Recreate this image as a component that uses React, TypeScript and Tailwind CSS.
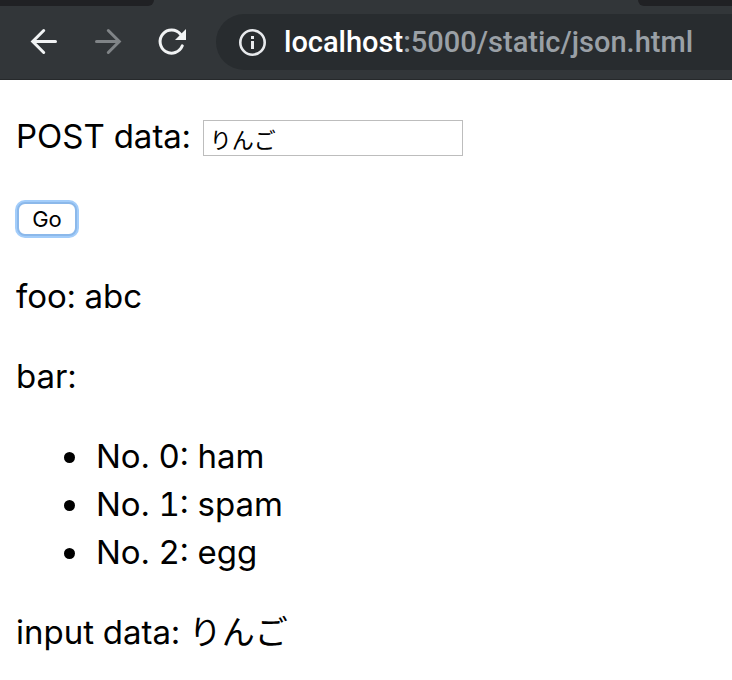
import React, { useState } from 'react';

interface ResponseData {
  foo: string;
  bar: string[];
  input: string;
}

const response: ResponseData = {
  foo: 'abc',
  bar: ['ham', 'spam', 'egg'],
  input: 'りんご',
};

const BrowserToolbar: React.FC = () => {
  return (
    <header className="bg-[#323639] border-b border-[#26292b]">
      {/* Bottom edges of the neighbouring tabs */}
      <div className="flex justify-between h-1.5">
        <div className="w-[154px] bg-[#202124] rounded-br-xl"></div>
        <div className="w-[94px] bg-[#202124] rounded-bl-xl"></div>
      </div>

      <div className="flex items-center pt-2 pb-[9px] pl-7">
        <button type="button" aria-label="Back" className="mr-8">
          <svg className="w-8 h-8" viewBox="0 0 32 32" fill="none" stroke="#f1f3f4" strokeWidth="3" strokeLinecap="round">
            <path d="M27.5 15.5H5.5M15.7 4.5L4.7 15.5L15.7 26.5" />
          </svg>
        </button>
        <button type="button" aria-label="Forward" className="mr-8">
          <svg className="w-8 h-8" viewBox="0 0 32 32" fill="none" stroke="#808487" strokeWidth="3" strokeLinecap="round">
            <path d="M4.5 15.5H26.5M16.3 4.5L27.3 15.5L16.3 26.5" />
          </svg>
        </button>
        <button type="button" aria-label="Reload" className="mr-7">
          <svg className="w-8 h-8" viewBox="0 0 32 32" fill="none">
            <path
              d="M26.3 19.8A11.5 11.5 0 1 1 24.5 8.3"
              stroke="#f1f3f4"
              strokeWidth="3"
              strokeLinecap="round"
            />
            <path d="M30 3V14H19Z" fill="#f1f3f4" />
          </svg>
        </button>

        <div className="flex flex-1 items-center h-14 pl-[22px] rounded-l-full bg-[#282c2f]">
          <svg className="w-7 h-7 mr-[18px] shrink-0" viewBox="0 0 28 28" fill="none">
            <circle cx="14.5" cy="14.5" r="12.2" stroke="#e8eaed" strokeWidth="2.6" />
            <path d="M13 8h3v3h-3zM13 13h3v8h-3z" fill="#e8eaed" />
          </svg>
          <span className="font-[Roboto,sans-serif] font-medium text-[29px] leading-8 text-[#9aa0a6] whitespace-nowrap">
            <span className="text-white">localhost</span>:5000/static/json.html
          </span>
        </div>
      </div>
    </header>
  );
};

export default function App() {
  const [text, setText] = useState('りんご');

  return (
    <div className="min-h-screen bg-white text-black">
      <BrowserToolbar />

      <main className="flex flex-col gap-8 px-4 py-8 font-[Inter,'Noto_Sans_CJK_JP',sans-serif] text-[33px] leading-[48px] tabular-nums">
        <div className="flex items-baseline h-12">
          <label htmlFor="post-data" className="mr-3">
            POST data:
          </label>
          <input
            id="post-data"
            type="text"
            value={text}
            onChange={(e) => setText(e.target.value)}
            className="w-[260px] h-9 px-1.5 border border-[#bdbdbd] bg-white text-[22px] leading-8"
          />
        </div>

        <div className="flex items-center h-12 pt-1.5">
          <button
            type="button"
            className="w-15 h-[34px] ml-px rounded-lg border-2 border-[#8bb8ea] bg-white ring-2 ring-[#a3cdfa] text-[22px] leading-7"
          >
            Go
          </button>
        </div>

        <p>foo: {response.foo}</p>
        <p>bar:</p>

        <ul className="pl-19 list-disc">
          {response.bar.map((item, index) => (
            <li key={item} className="pl-1">
              No. {index}: {item}
            </li>
          ))}
        </ul>

        <p>input data: {response.input}</p>
      </main>
    </div>
  );
}
